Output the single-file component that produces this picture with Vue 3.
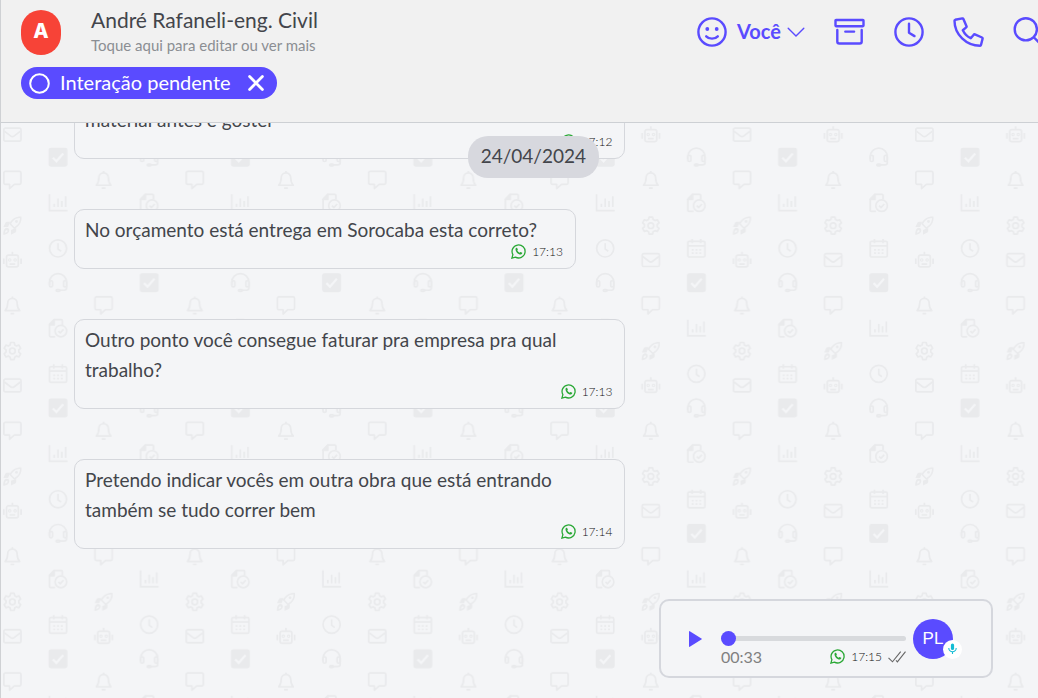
<script setup>
import { ref } from 'vue'

const position = ref(0)

const messages = [
  { id: 1, lines: ['material antes e goster'], time: '17:12', wide: true },
  { id: 2, lines: ['No orçamento está entrega em Sorocaba esta correto?'], time: '17:13' },
  { id: 3, lines: ['Outro ponto você consegue faturar pra empresa pra qual', 'trabalho?'], time: '17:13', wide: true },
  { id: 4, lines: ['Pretendo indicar vocês em outra obra que está entrando', 'também se tudo correr bem'], time: '17:14', wide: true }
]

// Wallpaper: four columns of icons, each column repeats every 264 units.
const columns = [
  { x: 12, y: 12, icons: ['mail', 'chat', 'rocket', 'robot', 'bell', 'gear'] },
  { x: 60, y: 36, icons: ['check', 'chart', 'clock', 'headset', 'doc', 'calendar'] },
  { x: 108, y: 12, icons: ['robot', 'bell', 'gear', 'mail', 'chat', 'rocket'] },
  { x: 156, y: 36, icons: ['headset', 'doc', 'calendar', 'check', 'chart', 'clock'] }
]
const steps = [0, 48, 96, 132, 180, 228]
const repeats = 8
const wallpaperIcons = columns.flatMap((col, c) =>
  Array.from({ length: repeats }, (_, r) =>
    col.icons.map((name, i) => ({
      key: `${c}-${r}-${i}`,
      name,
      x: col.x - 10,
      y: col.y - 10 + steps[i] + r * 264
    }))
  ).flat()
)
</script>

<template>
  <div class="page">
    <header class="header">
      <div class="topline">
        <div class="contact">
          <div class="avatar">A</div>
          <div class="who">
            <h1>André Rafaneli-eng. Civil</h1>
            <p>Toque aqui para editar ou ver mais</p>
          </div>
        </div>
        <nav class="actions">
          <button class="owner" type="button">
            <svg width="30" height="30" viewBox="0 0 30 30" fill="none" stroke="currentColor" stroke-width="2.4" stroke-linecap="round">
              <circle cx="15" cy="15" r="13.6" />
              <path d="M9.2 19.3c3 3.1 8.600 3.1 11.600 0" />
              <circle cx="10.300" cy="12" r="1.900" fill="currentColor" stroke="none" />
              <circle cx="19.700" cy="12" r="1.900" fill="currentColor" stroke="none" />
            </svg>
            <span>Você</span>
            <svg width="18" height="10" viewBox="0 0 18 10" fill="none" stroke="currentColor" stroke-width="1.400" stroke-linecap="round">
              <path d="M1.200 1.200 9 9l7.800-7.800" />
            </svg>
          </button>
          <button type="button" aria-label="Arquivar">
            <svg width="31" height="30" viewBox="0 0 31 30" fill="none" stroke="currentColor" stroke-width="2.400" stroke-linejoin="round" stroke-linecap="round">
              <rect x="1.500" y="3" width="28" height="6.200" rx="0.600" />
              <path d="M3.300 13v11.500a2 2 0 0 0 2 2h20.400a2 2 0 0 0 2-2V13M11.300 14.600h8.800" />
            </svg>
          </button>
          <button type="button" aria-label="Agendar">
            <svg width="30" height="30" viewBox="0 0 30 30" fill="none" stroke="currentColor" stroke-width="2.400" stroke-linecap="round" stroke-linejoin="round">
              <circle cx="15" cy="15" r="13.600" />
              <path d="M15 6.800v9l5.500 3.300" />
            </svg>
          </button>
          <button type="button" aria-label="Ligar">
            <svg width="31" height="30" viewBox="0 0 31 30" fill="none" stroke="currentColor" stroke-width="2.400" stroke-linejoin="round">
              <path d="M2.200 2.800 9.300 1.400a1 1 0 0 1 1.100.6l3.100 7.200a1 1 0 0 1-.3 1.200l-3.400 2.800c1.900 3.900 4.300 6.300 8 8l2.900-3.500a1 1 0 0 1 1.200-.3l7.100 3.100a1 1 0 0 1 .6 1.100L28 28a1 1 0 0 1-1 .7C13.300 28.700 1.500 17.500 1.500 3.800a1 1 0 0 1 .7-1z" />
            </svg>
          </button>
          <button type="button" aria-label="Buscar">
            <svg width="31" height="30" viewBox="0 0 31 30" fill="none" stroke="currentColor" stroke-width="2.400" stroke-linecap="round">
              <circle cx="12.800" cy="12.300" r="11.100" />
              <path d="m21 20.500 8 8" />
            </svg>
          </button>
        </nav>
      </div>
      <div class="tag">
        <svg width="21" height="21" viewBox="0 0 21 21" fill="none" stroke="currentColor" stroke-width="2">
          <circle cx="10.500" cy="10.500" r="9.300" />
        </svg>
        <span>Interação pendente</span>
        <button type="button" aria-label="Remover etiqueta">
          <svg width="16" height="16" viewBox="0 0 16 16" fill="none" stroke="currentColor" stroke-width="2.800" stroke-linecap="round">
            <path d="m1.600 1.600 12.800 12.800M14.400 1.600 1.600 14.400" />
          </svg>
        </button>
      </div>
    </header>

    <main class="chat">
      <svg class="wallpaper" aria-hidden="true">
        <defs>
          <g id="mail" fill="none" stroke="#e9eaec" stroke-width="1.800">
            <rect x="1" y="3.500" width="18" height="13.500" rx="1.500" />
            <path d="m1.500 6.500 6.500 5c1.300 1 2.700 1 4 0l6.500-5" />
          </g>
          <g id="chat" fill="none" stroke="#e9eaec" stroke-width="1.800" stroke-linejoin="round">
            <path d="M2.500 1h15A1.500 1.500 0 0 1 19 2.500V13a1.500 1.500 0 0 1-1.500 1.500H12L7 19v-4.500H2.500A1.500 1.500 0 0 1 1 13V2.500A1.500 1.500 0 0 1 2.500 1z" />
          </g>
          <g id="rocket" fill="#e9eaec">
            <path d="M19.500.5c.6 6-1.500 9.500-7.500 13.200L6.400 8C10 2.500 13.500.200 19.500.500zm-1.600 1.600C13.500 2.300 11.300 4 8.700 8l3.500 3.600c4-2.600 5.700-5 5.700-9.500z" fill-rule="evenodd" />
            <circle cx="14.300" cy="5.700" r="1.500" />
            <path d="M7.500 6H4.200c-.7 0-1.200.3-1.500.9L.500 11.500h5zM14 12.500v3.300c0 .7-.3 1.200-.9 1.500l-4.600 2.200v-5zM1.700 13.500c1.600-1.600 3.300-1.500 4.300-.5s1.100 3-.3 4.500C4.300 19 2 19.500.300 19.700.300 18 .500 15 1.700 13.500zm1.400 1.600c-.6.6-.8 1.500-.9 2.300.9 0 1.700-.3 2.300-.900.5-.500.5-1.200.2-1.500s-1-.4-1.600.1z" fill-rule="evenodd" />
          </g>
          <g id="robot" fill="none" stroke="#e9eaec" stroke-width="1.800">
            <rect x="3.800" y="5" width="12.400" height="12.500" rx="2" />
            <path d="M10 1.500V5M.900 8.500v6M19.100 8.500v6M7 14.500h6" />
            <circle cx="7.200" cy="10.200" r="1.300" stroke-width="1.200" />
            <circle cx="12.800" cy="10.200" r="1.300" stroke-width="1.200" />
          </g>
          <g id="bell" fill="none" stroke="#e9eaec" stroke-width="1.800" stroke-linejoin="round">
            <path d="M10 .500v1.800M10 2.500c-3 0-5 2.300-5 5.200 0 4-1 6-2.700 7.800h15.400C16 13.700 15 11.700 15 7.700c0-2.900-2-5.200-5-5.200zM8 18.600h4" />
          </g>
          <g id="gear" fill="none" stroke="#e9eaec" stroke-width="1.800" stroke-linejoin="round">
            <path d="m8.100 1-.5 2.600-1.900 1.100-2.500-.9-1.900 3.300 2 1.700v2.400l-2 1.700 1.900 3.300 2.500-.9 1.900 1.100.5 2.600h3.800l.5-2.600 1.900-1.100 2.500.9 1.900-3.300-2-1.700V8.800l2-1.700-1.900-3.300-2.500.9-1.900-1.100-.5-2.600z" />
            <circle cx="10" cy="10" r="3" />
          </g>
          <g id="check">
            <rect width="20" height="20" rx="2.500" fill="#e9eaec" />
            <path d="m4.500 10.500 3.800 3.800 7.200-8.300" fill="none" stroke="#f4f5f7" stroke-width="2.400" />
          </g>
          <g id="chart" fill="none" stroke="#e9eaec" stroke-width="1.800">
            <path d="M.900 1v17.100H20M6 14.500V11M10 14.500V5.500M14 14.500V8M18 14.500V3" />
          </g>
          <g id="clock" fill="none" stroke="#e9eaec" stroke-width="1.800">
            <circle cx="10" cy="10" r="9" />
            <path d="M10 4.500v6.200l3.300 2.300" />
          </g>
          <g id="headset" fill="none" stroke="#e9eaec" stroke-width="1.800" stroke-linejoin="round">
            <path d="M1 12.500V9.500a9 9 0 0 1 18 0v6a2.500 2.500 0 0 1-2.500 2.500H11" />
            <rect x="1" y="8" width="3.200" height="6.500" rx="1.300" />
            <rect x="15.800" y="8" width="3.200" height="6.500" rx="1.300" />
            <rect x="8" y="17.200" width="4" height="2" rx="1" />
          </g>
          <g id="doc" fill="none" stroke="#e9eaec" stroke-width="1.800" stroke-linejoin="round">
            <path d="M7 19H2a1 1 0 0 1-1-1V6l5-5h7.500a1 1 0 0 1 1 1v4.500" />
            <path d="M1 6.500h5V1z" fill="#e9eaec" />
            <circle cx="13" cy="13" r="6.100" />
            <path d="m10.300 13 2 2 3.500-3.800" />
          </g>
          <g id="calendar" fill="none" stroke="#e9eaec" stroke-width="1.800">
            <rect x="1" y="2.500" width="18" height="16.500" rx="1.500" />
            <path d="M1 7.200h18M5.500 0v4.500M14.500 0v4.500" />
            <path d="M5 11.500h2m2 0h2m2 0h2M5 15h2m2 0h2m2 0h2" />
          </g>
          <pattern id="wallpaper-tile" width="192" :height="repeats * 264" patternUnits="userSpaceOnUse" patternTransform="scale(0.95)">
            <use v-for="icon in wallpaperIcons" :key="icon.key" :href="'#' + icon.name" :x="icon.x" :y="icon.y" />
          </pattern>
        </defs>
        <rect width="100%" height="100%" fill="url(#wallpaper-tile)" />
      </svg>

      <div class="date">24/04/2024</div>

      <article v-for="m in messages" :key="m.id" class="bubble" :class="{ wide: m.wide }">
        <p v-for="line in m.lines" :key="line">{{ line }}</p>
        <div class="meta">
          <svg class="wa" width="15" height="15" viewBox="0 0 15 15" fill="none" stroke="currentColor" stroke-width="1.300">
            <path d="m.900 14.100 1-3.500a6.500 6.500 0 1 1 2.500 2.500z" />
            <path d="M4.500 4.700c.3-.8.900-1.200 1.500-1l.9 1.900-.6 1c.5 1 1.200 1.600 2.200 2.100l.9-.8 1.900.9c.1.800-.5 1.500-1.400 1.700-2.700.2-5.700-3-5.400-5.800z" fill="currentColor" stroke="none" />
          </svg>
          <time>{{ m.time }}</time>
        </div>
      </article>

      <article class="audio">
        <button class="play" type="button" aria-label="Reproduzir">
          <svg width="14" height="16" viewBox="0 0 14 16" fill="currentColor"><path d="M1 .600v14.800a.5.500 0 0 0 .8.400l11.600-7.200a.7.700 0 0 0 0-1.200L1.800.200A.5.500 0 0 0 1 .600z" /></svg>
        </button>
        <div class="player">
          <input v-model="position" type="range" min="0" max="33" aria-label="Posição do áudio" />
          <div class="info">
            <span class="length">00:33</span>
            <div class="meta">
              <svg class="wa" width="15" height="15" viewBox="0 0 15 15" fill="none" stroke="currentColor" stroke-width="1.300">
                <path d="m.900 14.100 1-3.500a6.500 6.500 0 1 1 2.500 2.500z" />
                <path d="M4.500 4.700c.3-.8.900-1.200 1.500-1l.9 1.900-.6 1c.5 1 1.200 1.600 2.200 2.100l.9-.8 1.900.9c.1.800-.5 1.500-1.400 1.700-2.700.2-5.700-3-5.400-5.800z" fill="currentColor" stroke="none" />
              </svg>
              <time>17:15</time>
              <svg width="18" height="12" viewBox="0 0 18 12" fill="none" stroke="#666" stroke-width="1.100">
                <path d="m.500 6.800 4 4L12.700.600M8 9.300l1.400 1.500L17.500.600" />
              </svg>
            </div>
          </div>
        </div>
        <div class="sender">
          PL
          <span class="mic">
            <svg width="9" height="12" viewBox="0 0 9 12" fill="none" stroke="#12bcd4" stroke-width="1.100">
              <rect x="2.900" y=".500" width="3.200" height="6.500" rx="1.600" fill="#12bcd4" stroke="none" />
              <path d="M.800 5a3.700 3.700 0 0 0 7.400 0M4.500 8.700V11" />
            </svg>
          </span>
        </div>
      </article>
    </main>
  </div>
</template>

<style>
body {
  margin: 0;
}
</style>

<style scoped>
.page {
  display: flex;
  flex-direction: column;
  box-sizing: border-box;
  height: 100vh;
  border-left: 1px solid #cfd1d4;
  overflow: hidden;
  font-family: Lato, "Open Sans", sans-serif;
  font-weight: 400;
  color: #43454b;
}
h1,
p {
  margin: 0;
  font-weight: inherit;
}
button {
  display: flex;
  align-items: center;
  padding: 0;
  border: 0;
  background: none;
  color: inherit;
  font: inherit;
}
svg {
  display: block;
  flex: none;
}
.header {
  flex: none;
  padding: 9px 0 23px 20px;
  border-bottom: 1px solid #cdd0d4;
  background: #f1f1f1;
  overflow: hidden;
}
.topline {
  display: flex;
  height: 46px;
}
.contact {
  display: flex;
  flex: 0 0 65%;
  align-items: center;
  gap: 30px;
  box-sizing: border-box;
  margin-right: 15px;
}
.avatar {
  display: grid;
  place-items: center;
  box-sizing: border-box;
  width: 40px;
  height: 45px;
  padding-bottom: 2px;
  border-radius: 20px;
  background: #f74337;
  color: #fff;
  font: 800 20px/20px Inter, sans-serif;
}
.who h1 {
  font-size: 21px;
  line-height: 26px;
}
.who p {
  color: #8b8e93;
  font-size: 15px;
  line-height: 24px;
}
.actions {
  display: flex;
  align-items: center;
  gap: 29px;
  color: #5a4bff;
}
.actions button {
  flex: none;
}
.owner span {
  margin: 0 6px 0 10px;
  padding-bottom: 2px;
  font-size: 20px;
  font-weight: 700;
}
.tag {
  display: inline-flex;
  align-items: center;
  height: 32px;
  margin-top: 12px;
  padding: 0 13px 0 8px;
  border-radius: 16px;
  background: #5a4bff;
  color: #fff;
  font-size: 20px;
}
.tag span {
  margin: 0 17px 0 10px;
  padding-bottom: 2px;
}
.chat {
  position: relative;
  display: flex;
  flex: 1;
  flex-direction: column;
  justify-content: flex-end;
  align-items: flex-start;
  gap: 50px;
  min-height: 0;
  padding: 0 45px 20px 73px;
  background: #f4f5f7;
  overflow: hidden;
}
.wallpaper {
  position: absolute;
  inset: 0;
  width: 100%;
  height: 100%;
}
.date {
  position: absolute;
  z-index: 1;
  top: 13px;
  left: 45%;
  padding: 0 13px 2px;
  border-radius: 20px;
  background: #d7d8de;
  font-size: 19px;
  line-height: 40px;
}
.bubble {
  position: relative;
  flex: none;
  box-sizing: border-box;
  max-width: 60%;
  padding: 5px 10px 11px;
  border: 1px solid #d5d7dc;
  border-radius: 10px;
  background: #f4f5f7;
  font-size: 19px;
}
.bubble.wide {
  width: 60%;
}
.bubble p {
  padding-right: 28px;
  line-height: 30px;
  white-space: nowrap;
}
.meta {
  display: flex;
  justify-content: flex-end;
  align-items: center;
  gap: 6px;
  height: 12px;
  font-size: 12px;
  font-weight: 300;
  color: #111;
}
.bubble .meta {
  padding-right: 2px;
}
.wa {
  color: #2aa835;
}
.audio {
  position: relative;
  display: flex;
  flex: none;
  align-items: center;
  align-self: flex-end;
  box-sizing: border-box;
  height: 79px;
  padding: 0 38px 0 27px;
  border: 2px solid #d5d7dd;
  border-radius: 10px;
  background: #f4f5f7;
}
.play {
  margin-right: 19px;
  color: #5a4bff;
}
.player {
  width: 185px;
  margin-right: 7px;
  padding-top: 20px;
}
.player input {
  display: block;
  width: 100%;
  height: 16px;
  margin: 0;
  appearance: none;
  background: none;
}
.player input::-webkit-slider-runnable-track {
  height: 5px;
  border-radius: 3px;
  background: #d8dadd;
}
.player input::-webkit-slider-thumb {
  width: 15px;
  height: 15px;
  margin-top: -5px;
  appearance: none;
  border-radius: 50%;
  background: #5a4bff;
}
.info {
  display: flex;
  justify-content: space-between;
  align-items: center;
  height: 20px;
}
.length {
  color: #808080;
  font-size: 16px;
}
.sender {
  position: relative;
  display: grid;
  place-items: center;
  width: 40px;
  height: 40px;
  border-radius: 50%;
  background: #5a4bff;
  color: #fff;
  font: 400 17px "Liberation Sans", sans-serif;
}
.mic {
  position: absolute;
  right: -9px;
  bottom: 0;
  display: grid;
  place-items: center;
  width: 19px;
  height: 19px;
  border-radius: 50%;
  background: #fff;
}
</style>
